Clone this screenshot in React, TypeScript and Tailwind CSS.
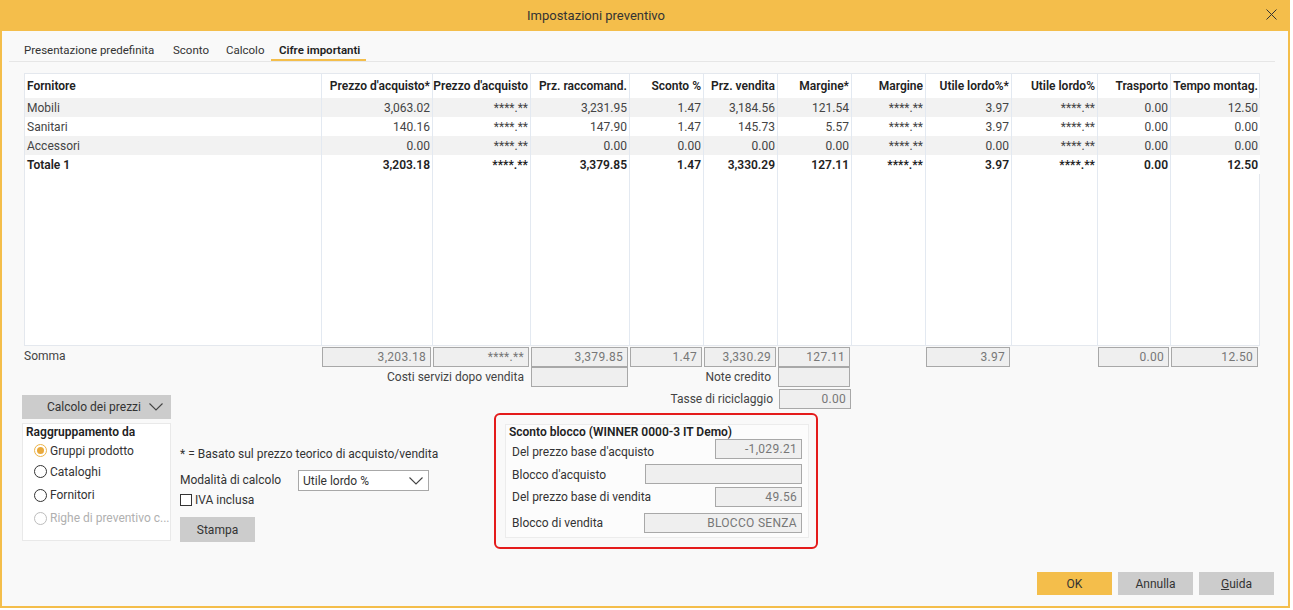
import clsx from 'clsx';

const cols = [
  { label: 'Fornitore', w: 'w-[297px]', left: true },
  { label: "Prezzo d'acquisto*", w: 'w-[111px]' },
  { label: "Prezzo d'acquisto", w: 'w-[98px]' },
  { label: 'Prz. raccomand.', w: 'w-[99px]' },
  { label: 'Sconto %', w: 'w-[74px]' },
  { label: 'Prz. vendita', w: 'w-[74px]' },
  { label: 'Margine*', w: 'w-[74px]' },
  { label: 'Margine', w: 'w-[74px]' },
  { label: 'Utile lordo%*', w: 'w-[86px]' },
  { label: 'Utile lordo%', w: 'w-[86px]' },
  { label: 'Trasporto', w: 'w-[73px]' },
  { label: 'Tempo montag.', w: 'w-[89px]' },
];

const rows = [
  ['Mobili', '3,063.02', '****.**', '3,231.95', '1.47', '3,184.56', '121.54', '****.**', '3.97', '****.**', '0.00', '12.50'],
  ['Sanitari', '140.16', '****.**', '147.90', '1.47', '145.73', '5.57', '****.**', '3.97', '****.**', '0.00', '0.00'],
  ['Accessori', '0.00', '****.**', '0.00', '0.00', '0.00', '0.00', '****.**', '0.00', '****.**', '0.00', '0.00'],
  ['Totale 1', '3,203.18', '****.**', '3,379.85', '1.47', '3,330.29', '127.11', '****.**', '3.97', '****.**', '0.00', '12.50'],
];

const somma = ['3,203.18', '****.**', '3,379.85', '1.47', '3,330.29', '127.11', null, '3.97', null, '0.00', '12.50'];

const gridCols = 'grid grid-cols-[297px_111px_98px_99px_74px_74px_74px_74px_86px_86px_73px_89px]';

const Field = ({ value, className }: { value?: string; className?: string }) => (
  <div
    className={clsx(
      'flex h-[20px] items-center justify-end border border-[#a8a8a8] bg-[#efefef] px-[4px] text-[#777] tracking-[0.3px]',
      className
    )}
  >
    {value}
  </div>
);

const Chevron = ({ className }: { className?: string }) => (
  <svg viewBox="0 0 14 8" className={className} fill="none" stroke="#444" strokeWidth="1.1">
    <path d="M0.5 0.5 L7 7 L13.5 0.5" />
  </svg>
);

const Radio = ({ label, checked, disabled }: { label: string; checked?: boolean; disabled?: boolean }) => (
  <div className={clsx('flex items-center gap-[3px] pl-[11px]', disabled ? 'text-[#b0b0b0]' : 'text-[#333]')}>
    <span
      className={clsx(
        'flex h-[13px] w-[13px] items-center justify-center rounded-full border bg-white',
        checked ? 'border-[#ecb44a]' : disabled ? 'border-[#bdbdbd]' : 'border-[#333]'
      )}
    >
      {checked && <span className="h-[7px] w-[7px] rounded-full bg-[#e9a93c]" />}
    </span>
    <span className="truncate">{label}</span>
  </div>
);

export default function App() {
  return (
    <div className="h-[610px] w-[1293px] bg-white font-[Roboto,sans-serif] text-[12px] text-[#333]">
      <div className="flex h-[608px] w-[1290px] flex-col bg-[#f4be4b] px-[2px] pb-[2px]">
        {/* title bar */}
        <div className="relative flex h-[31px] shrink-0 items-center justify-center pr-[98px] text-[13px] text-[#333]">
          Impostazioni preventivo
          <svg viewBox="0 0 11 11" className="absolute right-[11px] top-[9px] h-[11px] w-[11px]" stroke="#333" strokeWidth="1">
            <path d="M0.5 0.5 L10.5 10.5 M10.5 0.5 L0.5 10.5" />
          </svg>
        </div>

        <div className="flex flex-1 flex-col bg-[#f9f9f9]">
          {/* tabs */}
          <div className="ml-[7px] mr-[13px] mt-[11px] flex h-[20px] items-start border-b border-[#e6e6e6] pl-[15px]">
            <div className="h-[19px] w-[149px] whitespace-nowrap text-[11.5px] leading-[17px]">Presentazione predefinita</div>
            <div className="h-[19px] w-[53px] text-[11.5px] leading-[17px]">Sconto</div>
            <div className="h-[19px] w-[45px] text-[11.5px] leading-[17px]">Calcolo</div>
            <div className="h-[19px] w-[95px] whitespace-nowrap border-b-2 border-[#f4be4b] pl-[8px] text-[11.5px] font-semibold leading-[17px] text-[#222]">
              Cifre importanti
            </div>
          </div>

          {/* table */}
          <div className="ml-[22px] mt-[11px] flex h-[273px] w-[1236px] border border-[#e4e8ee] bg-white">
            {cols.map((c, ci) => (
              <div
                key={c.label}
                className={clsx('flex h-full shrink-0 flex-col', c.w, ci < cols.length - 1 && 'border-r border-[#e3e9f1]')}
              >
                <div
                  className={clsx(
                    'flex h-[24px] items-center whitespace-nowrap px-[2px] font-semibold text-[#222]',
                    c.left ? 'justify-start' : 'justify-end'
                  )}
                >
                  {c.label}
                </div>
                {rows.map((r, ri) => (
                  <div
                    key={ri}
                    className={clsx(
                      'flex h-[19px] items-center px-[2px]',
                      c.left ? 'justify-start' : 'justify-end',
                      ri % 2 === 0 ? 'bg-[#f2f2f2]' : 'bg-white',
                      ri === 3 ? 'font-semibold text-[#222]' : 'text-[#444]'
                    )}
                  >
                    {r[ci]}
                  </div>
                ))}
              </div>
            ))}
          </div>

          {/* somma */}
          <div className={clsx(gridCols, 'ml-[22px] mt-[1px] w-[1235px]')}>
            <div className="flex h-[20px] items-center pb-[3px] text-[#444]">Somma</div>
            {somma.map((v, i) => (v === null ? <div key={i} /> : <Field key={i} value={v} className="mx-[1px]" />))}

            <div className="col-span-3 flex h-[20px] items-center justify-end pr-[6px] text-[#444]">Costi servizi dopo vendita</div>
            <Field className="mx-[1px]" />
            <div className="col-span-2 flex h-[20px] items-center justify-end pr-[6px] text-[#444]">Note credito</div>
            <Field className="mx-[1px]" />
          </div>

          {/* lower section */}
          <div className="mt-[2px] flex">
            <div className="ml-[20px] flex w-[149px] shrink-0 flex-col">
              <div className="mt-[6px] flex h-[24px] items-center justify-end gap-[8px] bg-[#cccccc] pr-[8px] text-[#333]">
                Calcolo dei prezzi
                <Chevron className="h-[8px] w-[14px]" />
              </div>
              <div className="mt-[4px] flex h-[118px] flex-col border border-[#e9e9e9] bg-white">
                <div className="pl-[3px] font-semibold leading-[16px] text-[#222]">Raggruppamento da</div>
                <div className="flex h-[21px] items-center"><Radio label="Gruppi prodotto" checked /></div>
                <div className="flex h-[21px] items-center"><Radio label="Cataloghi" /></div>
                <div className="mt-[2px] flex h-[22px] items-center"><Radio label="Fornitori" /></div>
                <div className="mt-[1px] flex h-[22px] items-center"><Radio label="Righe di preventivo c..." disabled /></div>
              </div>
            </div>

            <div className="ml-[9px] flex w-[250px] shrink-0 flex-col">
              <div className="mt-[57px] whitespace-nowrap leading-[16px] text-[#333]">* = Basato sul prezzo teorico di acquisto/vendita</div>
              <div className="mt-[8px] flex h-[21px] items-center">
                <div className="w-[118px] pb-[2px]">Modalità di calcolo</div>
                <div className="flex h-[21px] w-[131px] items-center justify-between border border-[#a8a8a8] bg-white pl-[4px] pr-[5px]">
                  Utile lordo %
                  <Chevron className="h-[8px] w-[14px]" />
                </div>
              </div>
              <div className="mt-[2px] flex h-[13px] items-center gap-[3px]">
                <span className="h-[12px] w-[12px] border border-[#333] bg-white" />
                IVA inclusa
              </div>
              <div className="mt-[11px] flex h-[25px] w-[75px] items-center justify-center bg-[#cccccc]">Stampa</div>
            </div>

            <div className="ml-[64px] flex w-[357px] shrink-0 flex-col">
              <div className="flex h-[20px] items-center justify-end">
                <span className="pr-[6px] text-[#444]">Tasse di riciclaggio</span>
                <Field value="0.00" className="w-[72px]" />
              </div>
              <div className="mt-[4px] h-[136px] w-[324px] rounded-[6px] border-2 border-[#e41b1b] py-[9px] pl-[9px] pr-[7px]">
                <div className="flex h-full flex-col border border-[#ececec] bg-[#fcfcfc] pl-[3px] pr-[6px]">
                  <div className="mt-[1px] font-semibold leading-[13px] text-[#222]">Sconto blocco (WINNER 0000-3 IT Demo)</div>
                  <div className="flex h-[20px] items-center justify-between">
                    <span className="pl-[3px] pt-[6px]">Del prezzo base d'acquisto</span>
                    <Field value="-1,029.21" className="w-[87px]" />
                  </div>
                  <div className="mt-[5px] flex h-[20px] items-center justify-between">
                    <span className="pl-[3px] pt-[1px]">Blocco d'acquisto</span>
                    <Field className="w-[157px]" />
                  </div>
                  <div className="mt-[3px] flex h-[20px] items-center justify-between">
                    <span className="pl-[3px]">Del prezzo base di vendita</span>
                    <Field value="49.56" className="w-[87px]" />
                  </div>
                  <div className="mt-[6px] flex h-[20px] items-center justify-between">
                    <span className="pl-[3px]">Blocco di vendita</span>
                    <Field value="BLOCCO SENZA" className="w-[158px]" />
                  </div>
                </div>
              </div>
            </div>
          </div>

          {/* buttons */}
          <div className="mb-[11px] mr-[14px] mt-auto flex justify-end gap-[6px]">
            <div className="flex h-[23px] w-[75px] items-center justify-center bg-[#f4be4b]">OK</div>
            <div className="flex h-[23px] w-[75px] items-center justify-center bg-[#cccccc]">Annulla</div>
            <div className="flex h-[23px] w-[75px] items-center justify-center bg-[#cccccc]">
              <span className="underline">G</span>uida
            </div>
          </div>
        </div>
      </div>
    </div>
  );
}
